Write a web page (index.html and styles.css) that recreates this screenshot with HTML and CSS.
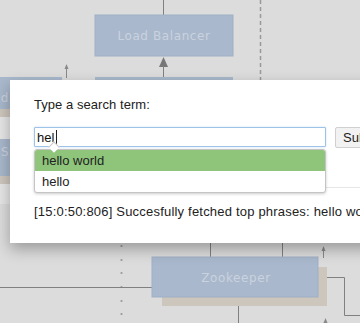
FILE: index.html
```html
<!DOCTYPE html>
<html lang="en">
<head>
    <meta charset="UTF-8">
    <meta name="viewport" content="width=device-width, initial-scale=1.0">
    <title>Search Autocomplete</title>
    <link rel="stylesheet" href="styles.css">
</head>
<body>
    <div class="stage">
        <!-- architecture diagram in the background -->
        <svg class="diagram" width="360" height="323" viewBox="0 0 360 323">
            <rect x="0" y="0" width="360" height="323" fill="#dcdcdc"/>

            <!-- left column, mostly under the dialog -->
            <rect x="0" y="109" width="40" height="95" fill="#e6e6e6"/>
            <rect x="-40" y="86" width="102" height="31" fill="#cdc6bd"/>
            <rect x="-50" y="77" width="112" height="32" fill="#a9b8cc"/>
            <text class="box-label" x="9" y="102" text-anchor="end">Frontend</text>
            <rect x="-40" y="148" width="102" height="36" fill="#cdc6bd"/>
            <rect x="-50" y="139" width="112" height="37" fill="#a9b8cc"/>
            <text class="box-label" x="1" y="156">Storage</text>

            <!-- load balancer -->
            <line x1="163.5" y1="0" x2="163.5" y2="15" class="wire"/>
            <rect x="95" y="15" width="138" height="41" fill="#a9b8cc" stroke="#9fb0c5"/>
            <text class="box-label" x="164" y="40" text-anchor="middle">Load Balancer</text>
            <polygon points="163.5,57 159,67 168,67" fill="#777"/>
            <line x1="163.5" y1="66" x2="163.5" y2="80" class="wire"/>
            <rect x="95" y="77" width="138" height="60" fill="#a9b8cc"/>

            <line x1="66.5" y1="67" x2="66.5" y2="78" class="wire-thin"/>
            <polygon points="66.5,64 64.5,69 68.5,69" fill="#888"/>

            <line x1="260.5" y1="0" x2="260.5" y2="80" stroke="#999" stroke-width="1.5" stroke-dasharray="4 3"/>

            <!-- below the dialog -->
            <g fill="#999">
                <circle cx="121.5" cy="246" r="1.1"/>
                <circle cx="121.5" cy="260" r="1.1"/>
                <circle cx="121.5" cy="273" r="1.1"/>
                <circle cx="121.5" cy="287" r="1.1"/>
                <circle cx="121.5" cy="301" r="1.1"/>
                <circle cx="121.5" cy="314" r="1.1"/>
            </g>
            <line x1="0" y1="287.5" x2="152" y2="287.5" class="wire"/>
            <line x1="210.5" y1="243" x2="210.5" y2="257" class="wire"/>
            <line x1="282.5" y1="243" x2="282.5" y2="257" class="wire"/>
            <line x1="323.5" y1="250" x2="323.5" y2="258" class="wire-thin"/>
            <polygon points="323.5,246 321.5,251 325.5,251" fill="#888"/>

            <line x1="238.5" y1="297" x2="238.5" y2="323" class="wire"/>
            <polyline points="318,277.5 344.5,277.5 344.5,315.5 360,315.5" fill="none" class="wire"/>
            <polygon points="325.5,318 323.5,323 327.5,323" fill="#888"/>

            <rect x="162" y="267" width="165" height="39" fill="#cdc6bd"/>
            <rect x="152" y="257" width="166" height="40" fill="#a9b8cc" stroke="#9fb0c5"/>
            <text class="box-label" x="236" y="282" text-anchor="middle">Zookeeper</text>
        </svg>

        <!-- search dialog -->
        <div class="dialog">
            <p class="prompt">Type a search term:</p>
            <div class="search-row">
                <div class="search-field">
                    <input class="search-input" type="text" value="hel">
                    <span class="text-cursor"></span>
                    <span class="caret"></span>
                    <ul class="suggestions">
                        <li class="suggestion active">hello world</li>
                        <li class="suggestion">hello</li>
                    </ul>
                </div>
                <button class="search-button">Submit</button>
            </div>
            <hr class="divider">
            <p class="status">[15:0:50:806] Succesfully fetched top phrases: hello world, hello</p>
        </div>
    </div>
</body>
</html>
```

FILE: styles.css
```css
/* Base */
body {
    margin: 0;
    font-family: 'Liberation Sans', Arial, sans-serif;
    background-color: #dcdcdc;
    overflow: hidden;
}

.stage {
    position: relative;
    width: 360px;
    height: 323px;
    overflow: hidden;
}

/* Diagram */
.diagram {
    display: block;
}

.wire {
    stroke: #808080;
    stroke-width: 1;
}

.wire-thin {
    stroke: #888;
    stroke-width: 1;
}

.box-label {
    font-family: 'DejaVu Sans', sans-serif;
    font-size: 12px;
    letter-spacing: 0.6px;
    fill: #c9d3df;
}

/* Dialog */
.dialog {
    position: absolute;
    left: 10px;
    top: 80px;
    width: 420px;
    height: 163px;
    box-sizing: border-box;
    padding: 17px 24px 0;
    background: #fff;
    box-shadow: 0 6px 14px rgba(0, 0, 0, 0.3);
}

.prompt {
    margin: 0;
    font-size: 13px;
    line-height: 15px;
    letter-spacing: 0.05px;
    color: #222;
}

.search-row {
    display: flex;
    gap: 9px;
    margin-top: 15px;
}

.search-field {
    position: relative;
    width: 292px;
}

.search-input {
    display: block;
    width: 100%;
    height: 20px;
    box-sizing: border-box;
    margin: 0;
    padding: 0 2px;
    border: 1px solid #9ec3e8;
    border-radius: 1px;
    font-family: inherit;
    font-size: 13px;
    color: #111;
    background: #fff;
    outline: none;
    box-shadow: 0 0 2px rgba(110, 160, 220, 0.4);
}

.text-cursor {
    position: absolute;
    left: 22px;
    top: 3px;
    width: 1px;
    height: 14px;
    background: #222;
}

.search-button {
    height: 21px;
    margin: 0;
    padding: 0 7px;
    border: 1px solid #d0d0d0;
    border-radius: 2px;
    background: #f2f2f2;
    font-family: inherit;
    font-size: 13px;
    color: #222;
}

.caret {
    position: absolute;
    left: 16px;
    top: 16px;
    width: 7px;
    height: 7px;
    background: #fff;
    border-left: 1px solid #c8c8c8;
    border-top: 1px solid #c8c8c8;
    transform: rotate(45deg);
    z-index: 2;
}

.suggestions {
    position: absolute;
    left: 0;
    top: 22px;
    width: 100%;
    box-sizing: border-box;
    margin: 0;
    padding: 0;
    list-style: none;
    background: #fff;
    border: 1px solid #c4c4c4;
    border-radius: 3px;
    overflow: hidden;
    box-shadow: 0 1px 3px rgba(0, 0, 0, 0.2);
    z-index: 1;
}

.suggestion {
    height: 21px;
    padding: 0 7px;
    font-size: 13px;
    line-height: 22px;
    color: #222;
}

.suggestion.active {
    background: #8ec57b;
}

.divider {
    margin: 39px -24px 0 0;
    border: 0;
    border-top: 1px solid #e6e6e6;
}

.status {
    margin: 16px 0 0;
    font-size: 13px;
    line-height: 15px;
    letter-spacing: 0.2px;
    color: #222;
    white-space: nowrap;
}
```
